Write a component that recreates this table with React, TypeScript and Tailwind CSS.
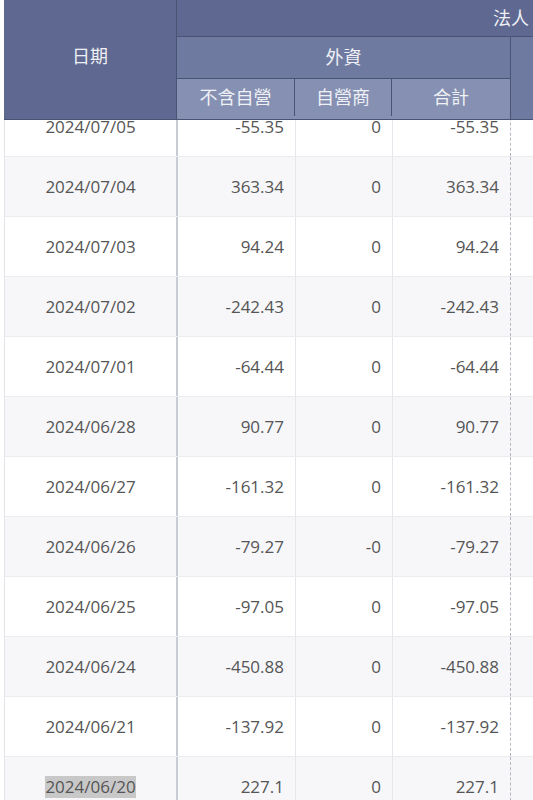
const rows = [
  ["2024/07/05", "-55.35", "0", "-55.35"],
  ["2024/07/04", "363.34", "0", "363.34"],
  ["2024/07/03", "94.24", "0", "94.24"],
  ["2024/07/02", "-242.43", "0", "-242.43"],
  ["2024/07/01", "-64.44", "0", "-64.44"],
  ["2024/06/28", "90.77", "0", "90.77"],
  ["2024/06/27", "-161.32", "0", "-161.32"],
  ["2024/06/26", "-79.27", "-0", "-79.27"],
  ["2024/06/25", "-97.05", "0", "-97.05"],
  ["2024/06/24", "-450.88", "0", "-450.88"],
  ["2024/06/21", "-137.92", "0", "-137.92"],
  ["2024/06/20", "227.1", "0", "227.1"],
];

const font = { fontFamily: '"Open Sans", "Noto Sans CJK TC", sans-serif' };

export default function App() {
  return (
    <div className="w-[533px] h-[800px] overflow-hidden bg-white" style={font}>
      <div className="ml-[4px] w-[720px]">
        {/* header */}
        <div className="relative z-10 flex text-[18px] text-[#eef0f6] border-b border-[#4a5373]">
          <div className="w-[173px] h-[119px] shrink-0 flex items-center justify-center pb-[6px] bg-[#5e6890] border-r border-[#4a5373]">
            日期
          </div>
          <div className="flex flex-col flex-1">
            <div className="h-[37px] flex items-center pl-[316px] bg-[#5e6890] border-b border-[#4a5373] whitespace-nowrap">
              法人
            </div>
            <div className="flex">
              <div className="w-[334px] flex flex-col border-r border-[#4a5373]">
                <div className="h-[42px] flex items-center justify-center bg-[#6f7aa0] border-b border-[#4a5373]">
                  外資
                </div>
                <div className="flex h-[40px] pb-[3px] bg-[#8690b2]">
                  <div className="w-[118px] flex items-center justify-center border-r border-[#4a5373]">不含自營</div>
                  <div className="w-[97px] flex items-center justify-center border-r border-[#4a5373]">自營商</div>
                  <div className="flex-1 flex items-center justify-center">合計</div>
                </div>
              </div>
              <div className="flex-1 bg-[#6f7aa0]" />
            </div>
          </div>
        </div>

        {/* body */}
        <div className="-mt-[23px] border-l border-[#e2e4ea] text-[17px] text-[#555]">
          {rows.map((r, i) => (
            <div
              key={r[0]}
              className={`grid grid-cols-[173px_118px_97px_118px_1fr] h-[60px] border-b border-[#ececf0] ${
                i % 2 === 1 ? "bg-[#f7f7f9]" : "bg-white"
              }`}
            >
              <div className="flex items-center justify-center border-r-2 border-[#c9ccd3]">
                {i === rows.length - 1 ? (
                  <span className="bg-[#c8c8c8] leading-[22px]">{r[0]}</span>
                ) : (
                  r[0]
                )}
              </div>
              <div className="flex items-center justify-end pr-[11px] border-r border-[#e6e7ec]">{r[1]}</div>
              <div className="flex items-center justify-end pr-[11px] border-r border-[#e6e7ec]">{r[2]}</div>
              <div className="flex items-center justify-end pr-[11px] border-r border-dashed border-[#b5b8c0]">{r[3]}</div>
              <div />
            </div>
          ))}
        </div>
      </div>
    </div>
  );
}
